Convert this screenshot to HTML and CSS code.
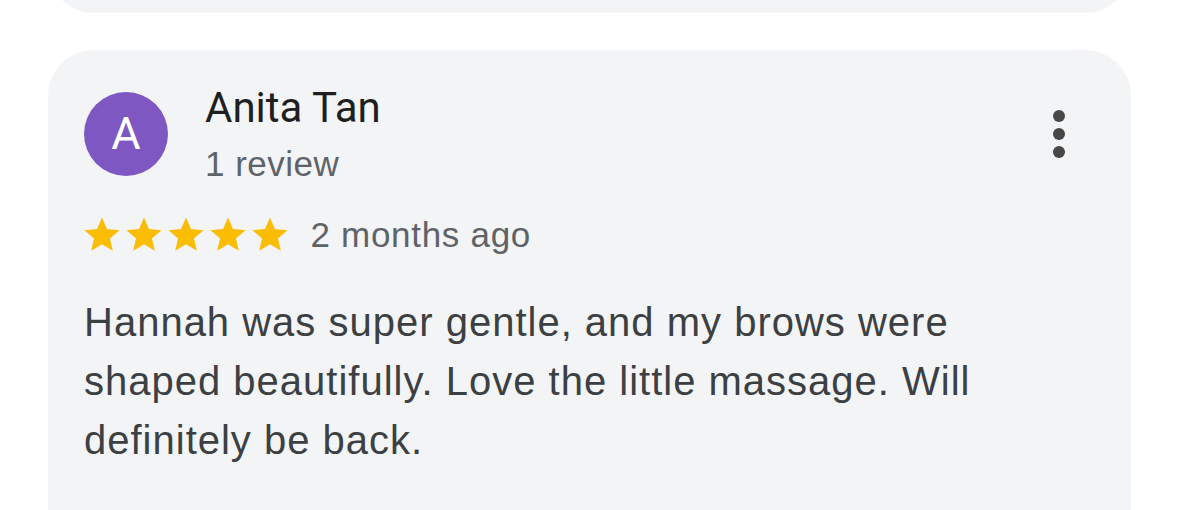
FILE: index.html
```html
<!DOCTYPE html>
<html lang="en">
<head>
<meta charset="utf-8">
<title>Review</title>
<link rel="stylesheet" href="styles.css">
</head>
<body>
<div class="list">
  <div class="card card-prev"></div>
  <div class="card review">
    <div class="header">
      <div class="avatar">A</div>
      <div class="who">
        <div class="name">Anita Tan</div>
        <div class="count">1 review</div>
      </div>
      <button class="menu" aria-label="More options">
        <span class="dot"></span><span class="dot"></span><span class="dot"></span>
      </button>
    </div>
    <div class="meta">
      <div class="stars">
        <svg class="star" viewBox="0 0 24 24"><path d="M12 17.27L18.18 21l-1.64-7.03L22 9.24l-7.19-.61L12 2 9.19 8.63 2 9.24l5.46 4.73L5.82 21z"/></svg>
        <svg class="star" viewBox="0 0 24 24"><path d="M12 17.27L18.18 21l-1.64-7.03L22 9.24l-7.19-.61L12 2 9.19 8.63 2 9.24l5.46 4.73L5.82 21z"/></svg>
        <svg class="star" viewBox="0 0 24 24"><path d="M12 17.27L18.18 21l-1.64-7.03L22 9.24l-7.19-.61L12 2 9.19 8.63 2 9.24l5.46 4.73L5.82 21z"/></svg>
        <svg class="star" viewBox="0 0 24 24"><path d="M12 17.27L18.18 21l-1.64-7.03L22 9.24l-7.19-.61L12 2 9.19 8.63 2 9.24l5.46 4.73L5.82 21z"/></svg>
        <svg class="star" viewBox="0 0 24 24"><path d="M12 17.27L18.18 21l-1.64-7.03L22 9.24l-7.19-.61L12 2 9.19 8.63 2 9.24l5.46 4.73L5.82 21z"/></svg>
      </div>
      <span class="when">2 months ago</span>
    </div>
    <p class="text">Hannah was super gentle, and my brows were shaped beautifully. Love the little massage. Will definitely be back.</p>
  </div>
</div>
</body>
</html>
```

FILE: styles.css
```css
html, body {
  margin: 0;
  padding: 0;
  background: #ffffff;
  overflow: hidden;
}

body {
  width: 1179px;
  height: 510px;
  font-family: "Liberation Sans", Arial, sans-serif;
}

.list {
  padding: 0 48px;
  display: flex;
  flex-direction: column;
}

.card {
  background: #f3f4f6;
  border-radius: 46px;
}

.card-prev {
  height: 100px;
  margin-top: -87px;
}

.review {
  margin-top: 37px;
  padding: 33px 48px 120px 36px;
}

.header {
  display: flex;
  align-items: flex-start;
}

.avatar {
  width: 84px;
  height: 84px;
  margin-top: 9px;
  border-radius: 50%;
  background: #7e57c2;
  color: #ffffff;
  font-family: Roboto, "Liberation Sans", sans-serif;
  font-size: 45px;
  line-height: 84px;
  text-align: center;
  flex: none;
}

.who {
  margin-left: 37px;
  flex: 1;
}

.name {
  font-family: Roboto, "Liberation Sans", sans-serif;
  font-size: 42px;
  line-height: 50px;
  color: #1f1f1f;
}

.count {
  margin-top: 11px;
  font-size: 35px;
  line-height: 40px;
  letter-spacing: 0.5px;
  color: #5f6368;
}

.menu {
  margin-top: 27px;
  width: 48px;
  padding: 0;
  border: 0;
  background: transparent;
  display: flex;
  flex-direction: column;
  align-items: center;
  gap: 6px;
}

.dot {
  width: 12px;
  height: 12px;
  border-radius: 50%;
  background: #474747;
}

.meta {
  margin-top: 30px;
  margin-left: -3.5px;
  height: 42px;
  display: flex;
  align-items: center;
}

.stars {
  display: flex;
}

.star {
  width: 42px;
  height: 42px;
  fill: #fbbc04;
  display: block;
}

.when {
  margin-left: 20px;
  font-size: 35px;
  line-height: 40px;
  letter-spacing: 0.7px;
  color: #5f6368;
}

.text {
  margin: 37px 0 0 0;
  font-size: 40px;
  line-height: 59px;
  letter-spacing: 1px;
  color: #3c4043;
}
```
